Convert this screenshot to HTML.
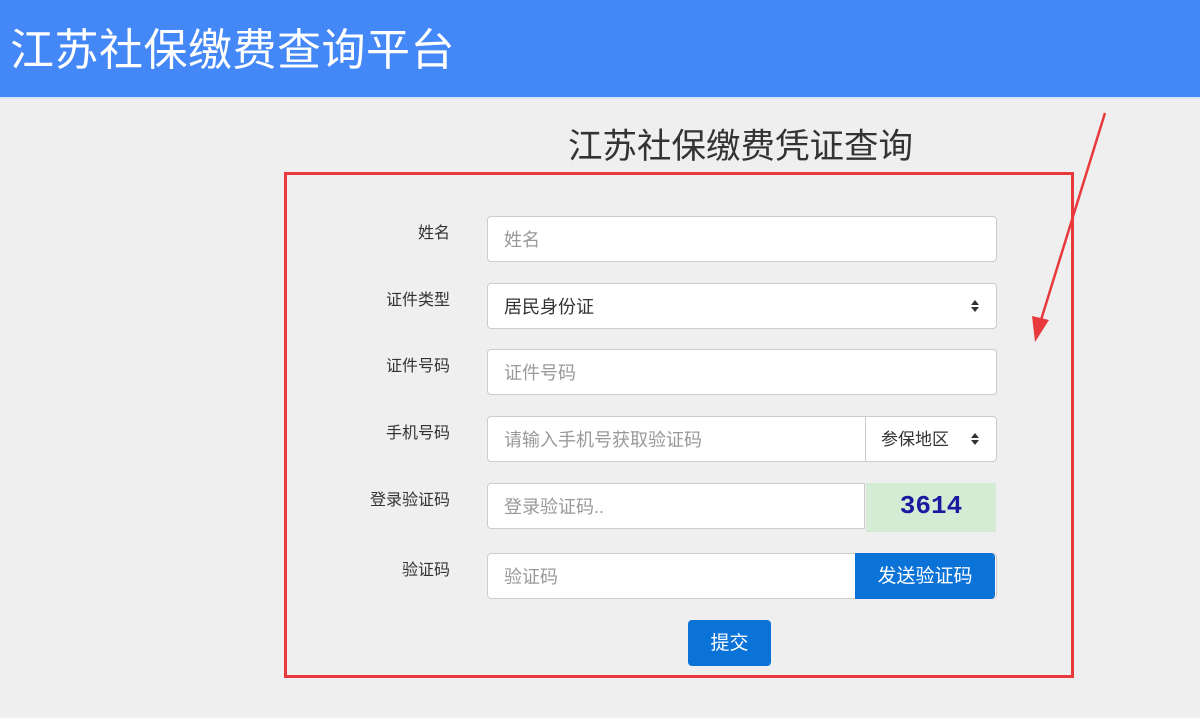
<!DOCTYPE html>
<html><head><meta charset="utf-8"><style>
body{margin:0;width:1200px;height:718px;background:#efefef;font-family:"Liberation Sans","Noto Sans CJK SC",sans-serif;position:relative;overflow:hidden}
.hd{position:absolute;left:0;top:0;width:1200px;height:97px;background:#4487f6;border-bottom:2px solid #d6e2f5}
.hd span{position:absolute;left:10px;top:14px;font-size:44px;color:#fff;letter-spacing:0.5px}
.t{position:absolute;left:568px;top:118px;font-size:34.5px;color:#333}
.box{position:absolute;left:284px;top:172px;width:784px;height:500px;border:3px solid #e8393c}
.lb{position:absolute;right:750px;font-size:16px;color:#333}
.in{position:absolute;left:487px;width:508px;height:44px;background:#fff;border:1px solid #ccc;border-radius:4px;box-sizing:content-box;font-size:18px;color:#999;line-height:46px;text-indent:16px}
.dark{color:#333}
.ar{position:absolute;right:16px;top:15px}
</style></head><body>
<div class="hd"><span>江苏社保缴费查询平台</span></div>
<div class="t">江苏社保缴费凭证查询</div>
<div class="box"></div>
<div class="lb" style="top:219px">姓名</div>
<div class="in" style="top:216px">姓名</div>
<div class="lb" style="top:286px">证件类型</div>
<div class="in dark" style="top:283px">居民身份证<svg class="ar" width="10" height="14"><polygon points="5,1 9,6 1,6" fill="#333"/><polygon points="1,8 9,8 5,13" fill="#333"/></svg></div>
<div class="lb" style="top:352px">证件号码</div>
<div class="in" style="top:349px">证件号码</div>
<div class="lb" style="top:419px">手机号码</div>
<div class="in" style="top:416px">请输入手机号获取验证码
 <div style="position:absolute;left:377px;top:0;width:131px;height:44px;border-left:1px solid #ccc;color:#333;text-indent:0;padding-left:15px;box-sizing:border-box;font-size:17px">参保地区</div>
 <svg class="ar" width="10" height="14"><polygon points="5,1 9,6 1,6" fill="#333"/><polygon points="1,8 9,8 5,13" fill="#333"/></svg></div>
<div class="lb" style="top:486px">登录验证码</div>
<div class="in" style="top:483px;width:376px;border-radius:4px 0 0 4px">登录验证码..</div>
<div style="position:absolute;left:866px;top:483px;width:130px;height:49px;background:#d4ecd4;color:#1a1aa0;font-family:'Liberation Mono',monospace;font-size:26px;line-height:46px;text-align:center;font-weight:bold">3614</div>
<div class="lb" style="top:556px">验证码</div>
<div class="in" style="top:553px">验证码</div>
<div style="position:absolute;left:855px;top:553px;width:140px;height:46px;background:#0b72d8;color:#fff;font-size:19px;line-height:48px;text-align:center;border-radius:0 4px 4px 0">发送验证码</div>
<div style="position:absolute;left:688px;top:620px;width:83px;height:46px;background:#0b72d8;color:#fff;font-size:19px;line-height:48px;text-align:center;border-radius:4px">提交</div>
<svg style="position:absolute;left:0;top:0" width="1200" height="718"><line x1="1105" y1="113" x2="1041" y2="320" stroke="#e8393c" stroke-width="2.5"/><polygon points="1035,342 1032,316 1049,320" fill="#e8393c"/></svg>
</body></html>
